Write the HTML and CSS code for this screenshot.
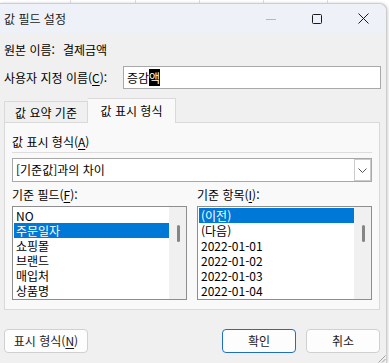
FILE: index.html
```html
<!DOCTYPE html>
<html lang="ko">
<head>
<meta charset="utf-8">
<title>값 필드 설정</title>
<link rel="stylesheet" href="styles.css">
</head>
<body>
<div class="dialog">
  <div class="titlebar">
    <span class="title">값 필드 설정</span>
    <div class="controls">
      <span class="ctl"><svg width="10" height="10" viewBox="0 0 10 10"><path d="M0 5.5H10" stroke="#b8b8b8" stroke-width="1"/></svg></span>
      <span class="ctl"><svg width="10" height="10" viewBox="0 0 10 10"><rect x="0.5" y="0.5" width="9" height="9" rx="1" fill="none" stroke="#1a1a1a"/></svg></span>
      <span class="ctl"><svg width="11" height="11" viewBox="0 0 11 11"><path d="M0.5 0.5L10.5 10.5M10.5 0.5L0.5 10.5" stroke="#1a1a1a"/></svg></span>
    </div>
  </div>
  <div class="content">
    <div class="src-row"><span>원본 이름:</span><span class="src-val">결제금액</span></div>
    <div class="name-row">
      <span class="name-label">사용자 지정 이름(<u>C</u>):</span>
      <div class="textbox"><span>증감</span><span class="selected-text">액</span></div>
    </div>
    <div class="tabs">
      <div class="tab">값 요약 기준</div>
      <div class="tab active">값 표시 형식</div>
    </div>
    <div class="panel">
      <div class="section-label">값 표시 형식(<u>A</u>)</div>
      <div class="separator"></div>
      <div class="dropdown">
        <span class="dropdown-text">[기준값]과의 차이</span>
        <span class="dropdown-btn"><svg width="9" height="5" viewBox="0 0 9 5"><path d="M0.5 0.5L4.5 4.5L8.5 0.5" fill="none" stroke="#555" stroke-width="1"/></svg></span>
      </div>
      <div class="list-labels">
        <span class="list-label">기준 필드(<u>F</u>):</span>
        <span class="list-label">기준 항목(<u>I</u>):</span>
      </div>
      <div class="lists">
        <div class="listbox">
          <div class="items">
            <div class="item">NO</div>
            <div class="item sel">주문일자</div>
            <div class="item">쇼핑몰</div>
            <div class="item">브랜드</div>
            <div class="item">매입처</div>
            <div class="item">상품명</div>
          </div>
          <div class="scrollbar"><div class="thumb"></div></div>
        </div>
        <div class="listbox">
          <div class="items">
            <div class="item sel">(이전)</div>
            <div class="item">(다음)</div>
            <div class="item">2022-01-01</div>
            <div class="item">2022-01-02</div>
            <div class="item">2022-01-03</div>
            <div class="item">2022-01-04</div>
          </div>
          <div class="scrollbar"><div class="thumb"></div></div>
        </div>
      </div>
    </div>
    <div class="buttons">
      <button class="btn wide">표시 형식(<u>N</u>)</button>
      <span class="spacer"></span>
      <button class="btn default">확인</button>
      <button class="btn">취소</button>
    </div>
  </div>
  <svg class="grip" width="9" height="9" viewBox="0 0 9 9"><path d="M8.5 1.5L1.5 8.5M8.5 5L5 8.5" stroke="#a0a0a0" stroke-width="1"/></svg>
</div>
</body>
</html>
```

FILE: styles.css
```css
* { box-sizing: border-box; }
html, body { margin: 0; padding: 0; }
body {
  width: 389px;
  height: 363px;
  overflow: hidden;
  background-color: #fff;
  background-image:
    linear-gradient(#dedede, #dedede),
    linear-gradient(#dedede, #dedede),
    linear-gradient(#dedede, #dedede),
    linear-gradient(#dedede, #dedede),
    linear-gradient(#dedede, #dedede);
  background-size: 1px 100%;
  background-position: 70px 0, 135px 0, 199px 0, 263px 0, 327px 0;
  background-repeat: no-repeat;
  font-family: "Noto Sans CJK KR", "Noto Sans", sans-serif;
  font-size: 12px;
  color: #000;
}
u { text-decoration: underline; text-underline-offset: 2px; }

.dialog {
  position: relative;
  margin-top: 3px;
  width: 387px;
  height: 360px;
  background: #f0f0f0;
  border-top: 1px solid #cdcdcd;
  border-right: 1px solid #cdcdcd;
  border-top-right-radius: 8px;
  box-shadow: 1px 0 3px rgba(0, 0, 0, 0.18);
  display: flex;
  flex-direction: column;
  overflow: hidden;
}

.titlebar {
  height: 29px;
  flex: none;
  display: flex;
  align-items: center;
  background: #eef2f8;
}
.title {
  padding-left: 4px;
  line-height: 16px;
  color: #1a1a1a;
}
.controls {
  margin-left: auto;
  display: flex;
  height: 100%;
}
.ctl {
  width: 46px;
  height: 100%;
  display: flex;
  align-items: center;
  justify-content: center;
}

.content {
  flex: 1;
  padding: 0 6px 0 4px;
  display: flex;
  flex-direction: column;
}

.src-row {
  margin-top: 9px;
  height: 16px;
  line-height: 16px;
  display: flex;
}
.src-val { margin-left: 8px; }

.name-row {
  margin-top: 8px;
  height: 23px;
  display: flex;
  align-items: center;
}
.name-label {
  width: 119px;
  flex: none;
  line-height: 16px;
}
.textbox {
  flex: 1;
  height: 23px;
  margin-right: -1px;
  background: #fff;
  border: 1px solid #a9a9a9;
  padding-left: 3px;
  display: flex;
  align-items: center;
  line-height: 17px;
}
.selected-text {
  background: #000;
  color: #fff;
  height: 17px;
}

.tabs {
  margin-top: 9px;
  height: 24px;
  display: flex;
  align-items: flex-end;
  position: relative;
  z-index: 1;
}
.tab {
  width: 84px;
  height: 21px;
  border: 1px solid #d9d9d9;
  border-bottom: none;
  background: #f0f0f0;
  display: flex;
  align-items: center;
  justify-content: center;
  line-height: 16px;
  padding-top: 1px;
}
.tab.active {
  width: 88px;
  height: 25px;
  margin-bottom: -1px;
  background: #f9f9f9;
  border-left: none;
  padding-top: 0;
}

.panel {
  height: 188px;
  border: 1px solid #d9d9d9;
  background: #f9f9f9;
  padding: 11px 7px 0 7px;
  display: flex;
  flex-direction: column;
}
.section-label {
  height: 16px;
  line-height: 16px;
}
.separator {
  margin-top: 2px;
  height: 1px;
  background: #dcdcdc;
}
.dropdown {
  margin-top: 5px;
  height: 24px;
  background: #fff;
  border: 1px solid #a8a8a8;
  display: flex;
  align-items: center;
}
.dropdown-text {
  flex: 1;
  padding-left: 3px;
  line-height: 16px;
}
.dropdown-btn {
  width: 17px;
  height: 100%;
  border: 1px solid #cbcbcb;
  display: flex;
  align-items: center;
  justify-content: center;
  padding-top: 1px;
}

.list-labels {
  margin-top: 5px;
  height: 16px;
  display: flex;
  gap: 10px;
}
.list-label {
  width: 175px;
  line-height: 16px;
}
.lists {
  margin-top: 3px;
  display: flex;
  gap: 10px;
}
.listbox {
  width: 175px;
  height: 94px;
  border: 1px solid #8e8e8e;
  background: #fff;
  display: flex;
  overflow: hidden;
}
.items {
  flex: 1;
  padding-top: 1px;
  overflow: hidden;
}
.item {
  height: 15px;
  line-height: 15px;
  margin-left: 1px;
  padding-left: 2px;
  white-space: nowrap;
}
.item.sel {
  background: #0078d7;
  color: #fff;
}
.scrollbar {
  width: 17px;
  flex: none;
  background: #f0f0f0;
}
.thumb {
  margin-top: 18px;
  margin-left: 8px;
  width: 3px;
  height: 17px;
  border-radius: 2px;
  background: #858585;
}

.buttons {
  margin-top: 19px;
  height: 24px;
  display: flex;
  gap: 10px;
}
.spacer { flex: 1; }
.btn {
  width: 74px;
  height: 24px;
  padding: 0;
  border: 1px solid #d0d0d0;
  border-radius: 4px;
  background: #fdfdfd;
  font-family: inherit;
  font-size: 12px;
  color: #1a1a1a;
  line-height: 16px;
}
.btn.wide { width: 84px; }
.btn.default {
  border-color: #1f6fc0;
}

.grip {
  position: absolute;
  right: 0;
  bottom: 0;
}
```
